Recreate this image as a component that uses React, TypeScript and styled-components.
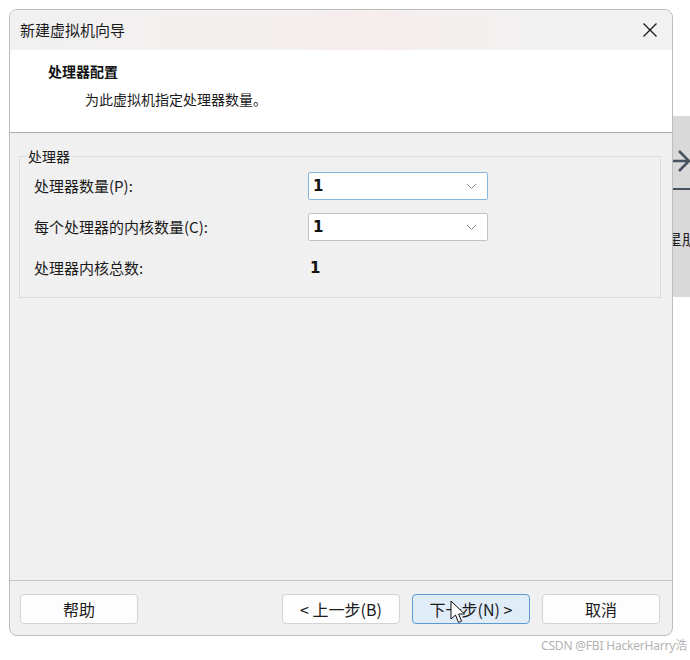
import React from "react";
import styled, { createGlobalStyle } from "styled-components";

const Global = createGlobalStyle`
  html, body { margin: 0; padding: 0; background: #ffffff; }
  body { font-family: "Noto Sans CJK SC", "Noto Sans", sans-serif; color: #1a1a1a; }
  * { box-sizing: border-box; }
`;

const FONT = `"Noto Sans CJK SC", "Noto Sans", sans-serif`;

const Page = styled.div`
  position: relative;
  width: 690px;
  height: 660px;
  overflow: hidden;
  background: #ffffff;
`;

const Stage = styled.div`
  display: flex;
  align-items: flex-start;
  padding: 9px 0 0 9px;
`;

const Dialog = styled.div`
  width: 664px;
  height: 627px;
  flex: none;
  border: 1px solid #bdbdbd;
  border-radius: 8px;
  overflow: hidden;
  display: flex;
  flex-direction: column;
  background: #f0f0f0;
  position: relative;
  z-index: 1;
`;

const TitleBar = styled.div`
  height: 40px;
  flex: none;
  display: flex;
  align-items: center;
  justify-content: space-between;
  padding: 0 14px 0 10px;
  background: linear-gradient(90deg, #f1f1f1 0%, #f4efef 35%, #f6eded 55%, #f2f1f1 80%, #f1f1f1 100%);
`;

const TitleText = styled.span`
  font-family: ${FONT};
  font-size: 15px;
  color: #1b1b1b;
  line-height: 20px;
`;

const CloseIcon = styled.svg`
  width: 16px;
  height: 16px;
  display: block;
`;

const Header = styled.div`
  height: 83px;
  flex: none;
  background: #ffffff;
  border-bottom: 1px solid #a9a9a9;
  padding: 11px 0 0 38px;
  display: flex;
  flex-direction: column;
`;

const HeaderTitle = styled.div`
  font-family: ${FONT};
  font-size: 14px;
  font-weight: 700;
  line-height: 20px;
  color: #111;
`;

const HeaderSub = styled.div`
  font-family: ${FONT};
  font-size: 14px;
  line-height: 20px;
  margin: 8px 0 0 37px;
  color: #1a1a1a;
`;

const Body = styled.div`
  flex: 1;
  padding: 13px 11px 0 9px;
`;

const Group = styled.fieldset`
  margin: 0;
  padding: 6px 0 15px 14px;
  border: 1px solid #dcdcdc;
  min-width: 0;
`;

const Legend = styled.legend`
  font-family: ${FONT};
  font-size: 14px;
  line-height: 20px;
  padding: 0 1px;
  margin-left: -7px;
  color: #1a1a1a;
`;

const FieldGrid = styled.div`
  display: grid;
  grid-template-columns: 274px 180px;
  grid-auto-rows: 28px;
  row-gap: 13px;
  align-items: center;
`;

const Label = styled.span`
  font-family: ${FONT};
  font-size: 15px;
  line-height: 20px;
  color: #1a1a1a;
`;

const Combo = styled.div<{ $focused?: boolean }>`
  height: 28px;
  background: #ffffff;
  border: 1px solid ${(p) => (p.$focused ? "#86b5dc" : "#c3c3c3")};
  border-radius: 2px;
  display: flex;
  align-items: center;
  justify-content: space-between;
  padding: 0 10px 0 4px;
`;

const ComboValue = styled.span`
  font-family: "DejaVu Sans", ${FONT};
  font-size: 15px;
  font-weight: 700;
  color: #111;
`;

const Chevron = styled.svg`
  width: 11px;
  height: 7px;
  display: block;
`;

const Value = styled.span`
  font-family: "DejaVu Sans", ${FONT};
  font-size: 15px;
  font-weight: 700;
  color: #111;
  padding-left: 2px;
`;

const Footer = styled.div`
  height: 55px;
  flex: none;
  border-top: 1px solid #c6c6c6;
  padding: 13px 12px 0 10px;
  display: flex;
  align-items: flex-start;
`;

const Spacer = styled.div`
  flex: 1;
`;

const ButtonGroup = styled.div`
  display: flex;
  gap: 12px;
`;

const Button = styled.button<{ $primary?: boolean }>`
  width: 118px;
  height: 30px;
  border-radius: 4px;
  border: 1px solid ${(p) => (p.$primary ? "#5d9ad2" : "#d3d3d3")};
  background: ${(p) => (p.$primary ? "#e0ecf8" : "#fdfdfd")};
  font-family: ${FONT};
  font-size: 16px;
  color: #1a1a1a;
  padding: 0;
  display: flex;
  align-items: center;
  justify-content: center;
  cursor: default;
`;

const SideStrip = styled.div`
  margin-top: 107px;
  width: 20px;
  height: 181px;
  background: #d9d9d9;
  flex: none;
  overflow: hidden;
  display: flex;
  flex-direction: column;
`;

const StripArrow = styled.svg`
  width: 20px;
  height: 80px;
  display: block;
  flex: none;
`;

const StripText = styled.span`
  font-family: ${FONT};
  font-size: 15px;
  line-height: 20px;
  margin: 33px 0 0 -6px;
  white-space: nowrap;
  color: #222;
`;

const Watermark = styled.div`
  position: absolute;
  right: 3px;
  top: 637px;
  font-family: "Noto Sans", ${FONT};
  font-size: 12px;
  line-height: 18px;
  color: #b3b3b3;
  letter-spacing: -0.2px;
`;

const Cursor = styled.svg`
  position: absolute;
  left: 450px;
  top: 600px;
  width: 18px;
  height: 26px;
  z-index: 5;
`;

export default function App() {
  return (
    <>
      <Global />
      <Page>
        <Stage>
          <Dialog>
            <TitleBar>
              <TitleText>新建虚拟机向导</TitleText>
              <CloseIcon viewBox="0 0 16 16">
                <path d="M1.5 1.5 L14.5 14.5 M14.5 1.5 L1.5 14.5" stroke="#1a1a1a" strokeWidth="1.3" fill="none" />
              </CloseIcon>
            </TitleBar>
            <Header>
              <HeaderTitle>处理器配置</HeaderTitle>
              <HeaderSub>为此虚拟机指定处理器数量。</HeaderSub>
            </Header>
            <Body>
              <Group>
                <Legend>处理器</Legend>
                <FieldGrid>
                  <Label>处理器数量(P):</Label>
                  <Combo $focused>
                    <ComboValue>1</ComboValue>
                    <Chevron viewBox="0 0 11 7">
                      <path d="M1 1 L5.5 5.5 L10 1" stroke="#8a8a8a" strokeWidth="1" fill="none" />
                    </Chevron>
                  </Combo>
                  <Label>每个处理器的内核数量(C):</Label>
                  <Combo>
                    <ComboValue>1</ComboValue>
                    <Chevron viewBox="0 0 11 7">
                      <path d="M1 1 L5.5 5.5 L10 1" stroke="#8a8a8a" strokeWidth="1" fill="none" />
                    </Chevron>
                  </Combo>
                  <Label>处理器内核总数:</Label>
                  <Value>1</Value>
                </FieldGrid>
              </Group>
            </Body>
            <Footer>
              <Button>帮助</Button>
              <Spacer />
              <ButtonGroup>
                <Button>&lt; 上一步(B)</Button>
                <Button $primary>下一步(N) &gt;</Button>
                <Button>取消</Button>
              </ButtonGroup>
            </Footer>
          </Dialog>
          <SideStrip>
            <StripArrow viewBox="0 0 20 80">
              <path d="M0 45 L15 45 M6 35 L16 45 L6 55" stroke="#46535e" strokeWidth="2.6" fill="none" />
              <path d="M0 73 L20 73" stroke="#46535e" strokeWidth="2" />
            </StripArrow>
            <StripText>星朋</StripText>
          </SideStrip>
        </Stage>
        <Cursor viewBox="0 0 18 26">
          <path d="M1 1 L1 19 L5.5 15 L8.5 22.5 L11.5 21.2 L8.6 14 L14.5 14 Z" fill="#ffffff" stroke="#111" strokeWidth="1" strokeLinejoin="round" />
        </Cursor>
        <Watermark>CSDN @FBI HackerHarry浩</Watermark>
      </Page>
    </>
  );
}
